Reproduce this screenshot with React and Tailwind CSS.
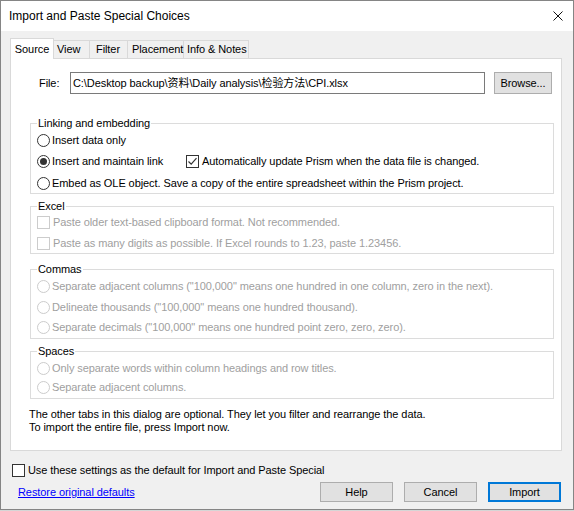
import React from "react";

const dim = "text-[#a0a0a0]";

function Radio({ label, checked, disabled, className = "" }) {
  return (
    <div className={`flex items-center h-[18px] ${className}`}>
      <span
        className={`w-[13px] h-[13px] shrink-0 rounded-full border bg-white flex items-center justify-center ${
          disabled ? "border-[#cccccc]" : "border-[#333333]"
        }`}
      >
        {checked && <span className="w-[7px] h-[7px] rounded-full bg-[#333333]" />}
      </span>
      <span className={`ml-[2px] whitespace-nowrap ${disabled ? dim : "text-black"}`}>{label}</span>
    </div>
  );
}

function Check({ label, checked, disabled, className = "" }) {
  return (
    <div className={`flex items-center h-[18px] ${className}`}>
      <span
        className={`w-[13px] h-[13px] shrink-0 border bg-white flex items-center justify-center ${
          disabled ? "border-[#cccccc]" : "border-[#333333]"
        }`}
      >
        {checked && (
          <svg width="11" height="11" viewBox="0 0 11 11">
            <path d="M1.5 5.5 L4.2 8.2 L9.5 2.2" fill="none" stroke="#333" strokeWidth="1.2" />
          </svg>
        )}
      </span>
      <span className={`ml-[3px] whitespace-nowrap ${disabled ? dim : "text-black"}`}>{label}</span>
    </div>
  );
}

function Group({ title, className = "", children }) {
  return (
    <fieldset className={`border border-[#dcdcdc] ml-[19px] mr-[7px] px-[6px] ${className}`}>
      <legend className="px-px leading-[14px]">{title}</legend>
      {children}
    </fieldset>
  );
}

function Tab({ label, active, className }) {
  if (active) {
    return (
      <div
        className={`${className} h-[21px] -mb-px relative z-10 bg-white border border-b-0 border-[#d9d9d9] flex items-center justify-center`}
      >
        {label}
      </div>
    );
  }
  return (
    <div
      className={`${className} h-[18px] self-end border-t border-r border-[#d9d9d9] flex items-center whitespace-nowrap`}
    >
      {label}
    </div>
  );
}

function Button({ children, primary }) {
  return (
    <button
      className={`w-[73px] h-[20px] bg-[#e1e1e1] flex items-center justify-center ${
        primary ? "border-2 border-[#0078d7]" : "border border-[#adadad]"
      }`}
    >
      {children}
    </button>
  );
}

export default function App() {
  return (
    <div className="w-[574px] h-[511px] bg-[#d6d6d6] font-['Liberation_Sans','Noto_Sans_CJK_SC',sans-serif] text-[11px] tracking-[-0.08px] text-black">
      <div className="h-[510px] border border-[#858585] bg-[#f0f0f0] flex flex-col">
        {/* title bar */}
        <div className="h-[30px] bg-white flex items-center justify-between pl-[8px] pr-[10px]">
          <span className="text-[12px] tracking-normal">Import and Paste Special Choices</span>
          <svg width="10" height="10" viewBox="0 0 10 10">
            <path d="M0.5 0.5 L9.5 9.5 M9.5 0.5 L0.5 9.5" stroke="#111" strokeWidth="1" />
          </svg>
        </div>

        <div className="flex-1 flex flex-col pt-[7px] pl-[9px] pr-[11px]">
          {/* tabs */}
          <div className="flex h-[20px]">
            <Tab label="Source" active className="w-[44px]" />
            <Tab label="View" className="w-[36px] pl-[3px]" />
            <Tab label="Filter" className="w-[38px] pl-[6px]" />
            <Tab label="Placement" className="w-[56px] pl-[4px]" />
            <Tab label="Info & Notes" className="w-[65px] pl-[3px]" />
          </div>

          {/* Source panel */}
          <div className="w-[552px] h-[393px] bg-white border border-[#d9d9d9] flex flex-col">
            <div className="flex items-center mt-[13px] pl-[28px]">
              <span className="w-[31px]">File:</span>
              <div className="w-[415px] h-[22px] border border-[#7a7a7a] bg-white flex items-center pl-[2px] whitespace-nowrap">
                C:\Desktop backup\资料\Daily analysis\检验方法\CPI.xlsx
              </div>
              <button className="ml-[9px] w-[58px] h-[22px] bg-[#e1e1e1] border border-[#adadad]">Browse...</button>
            </div>

            <Group title="Linking and embedding" className="mt-[22px] pb-[1px]">
              <Radio label="Insert data only" className="mt-[1px]" />
              <div className="flex mt-[3px]">
                <Radio label="Insert and maintain link" checked className="w-[149px]" />
                <Check label="Automatically update Prism when the data file is changed." checked />
              </div>
              <Radio
                label="Embed as OLE object. Save a copy of the entire spreadsheet within the Prism project."
                className="mt-[4px]"
              />
            </Group>

            <Group title="Excel" className="mt-[5px] pb-[1px]">
              <Check label="Paste older text-based clipboard format. Not recommended." disabled />
              <Check
                label="Paste as many digits as possible. If Excel rounds to 1.23, paste 1.23456."
                disabled
                className="mt-[3px]"
              />
            </Group>

            <Group title="Commas" className="mt-[8px] pb-[2px]">
              <Radio
                label={'Separate adjacent columns ("100,000" means one hundred in one column, zero in the next).'}
                disabled
                className="mt-[1px]"
              />
              <Radio
                label={'Delineate thousands ("100,000" means one hundred thousand).'}
                disabled
                className="mt-[3px]"
              />
              <Radio
                label={'Separate decimals ("100,000" means one hundred point zero, zero, zero).'}
                disabled
                className="mt-[2px]"
              />
            </Group>

            <Group title="Spaces" className="mt-[5px] pb-[2px]">
              <Radio
                label="Only separate words within column headings and row titles."
                disabled
                className="mt-[1px]"
              />
              <Radio label="Separate adjacent columns." disabled className="mt-[1px]" />
            </Group>

            <div className="mt-[9px] ml-[18px] leading-[13px]">
              <p>The other tabs in this dialog are optional. They let you filter and rearrange the data.</p>
              <p>To import the entire file, press Import now.</p>
            </div>
          </div>

          <Check label="Use these settings as the default for Import and Paste Special" className="mt-[10px] ml-[2px]" />

          <div className="flex items-center justify-between mt-[3px] h-[20px]">
            <a href="#" className="ml-[8px] text-[#0000ff] underline">
              Restore original defaults
            </a>
            <div className="flex gap-[11px] mr-[1px]">
              <Button>Help</Button>
              <Button>Cancel</Button>
              <Button primary>Import</Button>
            </div>
          </div>
        </div>
      </div>
    </div>
  );
}
